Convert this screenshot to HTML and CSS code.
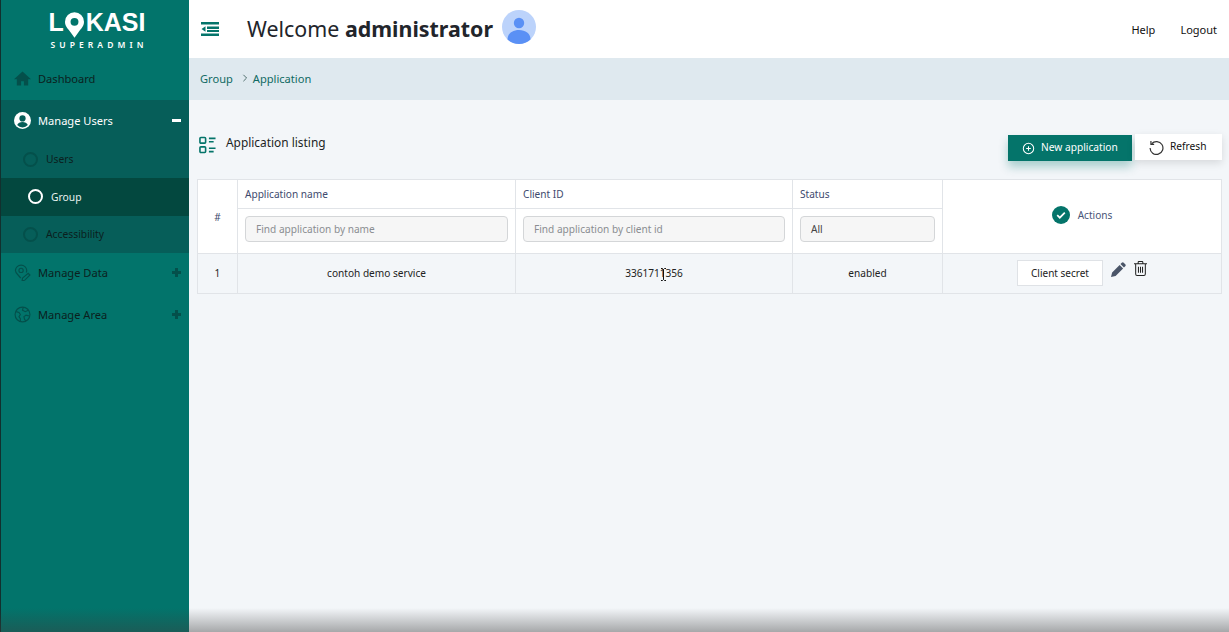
FILE: index.html
```html
<!DOCTYPE html>
<html>
<head>
    <meta charset="UTF-8">
    <meta name="viewport" content="width=device-width, initial-scale=1.0">
    <title>Lokasi Superadmin</title>
    <link rel="stylesheet" href="styles.css">
</head>
<body>
    <div class="app">
        <aside class="sidebar">
            <div class="logo">
                <div class="logo-word">
                    <span>L</span>
                    <svg class="logo-pin" viewBox="0 0 24 32"><path fill-rule="evenodd" fill="#fff" d="M12 0a12 12 0 0 1 12 12c0 6-4 9-7 13l-5 7-5-7C4 21 0 18 0 12A12 12 0 0 1 12 0zm0 7a5 5 0 1 0 0 10 5 5 0 0 0 0-10z"/></svg>
                    <span>KASI</span>
                </div>
                <div class="logo-sub">SUPERADMIN</div>
            </div>
            <div class="menu-item">
                <svg class="menu-icon" viewBox="0 0 24 24"><path fill="#04504b" d="M12 2 0 13h4v9h6v-6h4v6h6v-9h4z"/></svg>
                <span>Dashboard</span>
            </div>
            <div class="menu-group">
                <div class="menu-item menu-open">
                    <svg class="menu-icon" viewBox="0 0 24 24"><circle cx="12" cy="12" r="12" fill="#fff"/><circle cx="12" cy="9" r="4.4" fill="#065e59"/><path fill="#065e59" d="M4.5 18.5c1-3.4 4-4.5 7.500-4.500s6.500 1.100 7.500 4.500a10 10 0 0 1-15 0z"/></svg>
                    <span>Manage Users</span>
                    <span class="menu-toggle minus"></span>
                </div>
                <div class="sub-item"><span class="ring"></span>Users</div>
                <div class="sub-item sub-active"><span class="ring"></span>Group</div>
                <div class="sub-item"><span class="ring"></span>Accessibility</div>
            </div>
            <div class="menu-item menu-low">
                <svg class="menu-icon" viewBox="0 0 24 24" fill="none" stroke="#04504b" stroke-width="1.600"><circle cx="10" cy="9" r="3"/><path d="M10 1.500a8 8 0 0 1 8 7.500c0 1-.3 2-.8 3M10 1.500a8 8 0 0 0-8 7.500c0 4 4 6 7.500 11M12 20l8-7 2.500 2.500-7.500 7.500-3.500.5z"/></svg>
                <span>Manage Data</span>
                <span class="menu-toggle plus"></span>
            </div>
            <div class="menu-item menu-low">
                <svg class="menu-icon" viewBox="0 0 24 24" fill="none" stroke="#04504b" stroke-width="1.600"><circle cx="12" cy="12" r="10.500"/><path d="M3 8l4 1 2 3-2 3 2 3v4M13 2l-1 4 4 2 4-2M21 14l-4-1-3 2 1 4 2 2"/></svg>
                <span>Manage Area</span>
                <span class="menu-toggle plus"></span>
            </div>
        </aside>

        <main class="main">
            <header class="topbar">
                <svg class="collapse-icon" viewBox="0 0 18 14"><path fill="#04746a" d="M0 0h18v2.500H0zM6 4.500h12V7H6zM6 8h12v2H6zM0 11.500h18V14H0zM4.500 4.200v5.600L0.500 7z"/></svg>
                <h1 class="welcome">Welcome <b>administrator</b></h1>
                <svg class="avatar" viewBox="0 0 34 34"><circle cx="17" cy="17" r="17" fill="#bcd3fb"/><circle cx="17" cy="13" r="5.200" fill="#5a90f5"/><path fill="#5a90f5" d="M5.500 29.500c0-6 5-9.500 11.500-9.500s11.500 3.500 11.500 9.500A17 17 0 0 1 17 34a17 17 0 0 1-11.500-4.500z"/></svg>
                <nav class="top-links">
                    <a>Help</a>
                    <a>Logout</a>
                </nav>
            </header>

            <div class="breadcrumb">
                <span>Group</span>
                <svg class="crumb-sep" viewBox="0 0 6 10"><path d="M1 1l4 4-4 4" fill="none" stroke="#3d5f5c" stroke-width="1.100"/></svg>
                <span>Application</span>
            </div>

            <section class="content">
                <div class="page-head">
                    <div class="page-title">
                        <svg class="list-icon" viewBox="0 0 18 18" fill="none" stroke="#04746a" stroke-width="1.700"><rect x="1" y="1" width="6" height="6" rx="1"/><rect x="1" y="11" width="6" height="6" rx="1"/><path d="M10.500 2h7M10.500 5.500h5M10.500 12.500h7M10.500 16h5"/></svg>
                        <span>Application listing</span>
                    </div>
                    <div class="page-actions">
                        <button class="btn btn-primary">
                            <svg class="btn-icon" viewBox="0 0 14 14" fill="none" stroke="#fff" stroke-width="1.100"><circle cx="7" cy="7" r="5.600"/><path d="M7 4.500v5M4.500 7h5"/></svg>
                            New application
                        </button>
                        <button class="btn btn-light">
                            <svg class="btn-icon refresh-icon" viewBox="0 0 14 14" fill="none" stroke="#333" stroke-width="1.100"><path d="M2.500 3.500A6 6 0 1 1 1 7.500"/><path d="M1.800 1v3h3" /></svg>
                            Refresh
                        </button>
                    </div>
                </div>

                <table class="listing">
                    <thead>
                        <tr class="head-row">
                            <th class="col-num" rowspan="2">#</th>
                            <th class="col-name">Application name</th>
                            <th class="col-client">Client ID</th>
                            <th class="col-status">Status</th>
                            <th class="col-actions" rowspan="2">
                                <div class="actions-head">
                                    <svg class="check-icon" viewBox="0 0 18 18"><circle cx="9" cy="9" r="9" fill="#04746a"/><path d="M5.200 9.200l2.600 2.500 5-5" fill="none" stroke="#fff" stroke-width="1.700"/></svg>
                                    <span>Actions</span>
                                </div>
                            </th>
                        </tr>
                        <tr class="filter-row">
                            <th><input class="filter" placeholder="Find application by name"></th>
                            <th><input class="filter" placeholder="Find application by client id"></th>
                            <th><div class="filter filter-select">All</div></th>
                        </tr>
                    </thead>
                    <tbody>
                        <tr class="data-row">
                            <td>1</td>
                            <td>contoh demo service</td>
                            <td><span class="client-id">3361711356<svg class="ibeam" viewBox="0 0 7 13"><path d="M1 .5h1.500l1 1 1-1H6M3.500 1.500v10M1 12.500h1.500l1-1 1 1H6" fill="none" stroke="#111" stroke-width="1"/></svg></span></td>
                            <td>enabled</td>
                            <td>
                                <div class="row-actions">
                                    <button class="btn-secret">Client secret</button>
                                    <svg class="pencil-icon" viewBox="0 0 16 16"><path fill="#4a5568" d="M11.500.8a1.500 1.500 0 0 1 2.100 0l1.600 1.600a1.500 1.500 0 0 1 0 2.100l-1.400 1.400-3.700-3.700zM9.200 3.100l3.700 3.700-8 8L0 16l1.200-4.900z"/></svg>
                                    <svg class="trash-icon" viewBox="0 0 14 16" fill="none" stroke="#222" stroke-width="1.100"><path d="M0 3h14M4.500 3V1.200q0-.7.700-.7h3.600q.7 0 .7.700V3M1.800 3v11q0 1.500 1.500 1.500h7.400q1.500 0 1.500-1.500V3M4.800 6v6.500M7 6v6.500M9.200 6v6.500"/></svg>
                                </div>
                            </td>
                        </tr>
                    </tbody>
                </table>
            </section>
        </main>
    </div>
    <div class="bottom-fade"></div>
</body>
</html>
```

FILE: styles.css
```css
* {
    box-sizing: border-box;
}
html, body {
    margin: 0;
    height: 632px;
    overflow: hidden;
}
body {
    font-family: "Noto Sans", "Open Sans", sans-serif;
    font-size: 11px;
    color: #222;
    background-color: #f3f6f9;
}
.app {
    display: flex;
    height: 632px;
}

/* sidebar */
.sidebar {
    width: 189px;
    flex: none;
    background: #02746b;
    border-left: 1px solid #12302e;
    color: #0b1f1e;
}
.logo {
    height: 58px;
    padding-top: 10px;
    display: flex;
    flex-direction: column;
    align-items: center;
    color: white;
    margin-left: 4px;
}
.logo-word {
    display: flex;
    align-items: flex-start;
    height: 30px;
    font-family: "Liberation Sans", sans-serif;
    font-size: 25px;
    font-weight: bold;
    line-height: 24px;
}
.logo-pin {
    width: 19px;
    height: 26px;
    margin: 2px 2px 0 1px;
}
.logo-sub {
    font-family: "Noto Sans", sans-serif;
    font-size: 8.500px;
    font-weight: 600;
    letter-spacing: 4.100px;
    line-height: 10px;
    margin-left: 4px;
}
.menu-item {
    height: 42px;
    display: flex;
    align-items: center;
    padding: 0 8px 2px 13px;
    font-size: 11.100px;
}
.menu-low {
    padding-bottom: 4px;
}
.menu-icon {
    width: 17px;
    height: 17px;
    margin-right: 7px;
    flex: none;
}
.menu-group {
    background: #065e59;
}
.menu-open {
    height: 41px;
    color: white;
    padding-bottom: 1px;
}
.menu-toggle {
    margin-left: auto;
    position: relative;
    width: 9px;
    height: 9px;
}
.minus::before, .plus::before, .plus::after {
    content: "";
    position: absolute;
    background: #04504b;
}
.minus::before {
    background: white;
    left: 0;
    right: 0;
    top: 3px;
    height: 3px;
}
.plus::before {
    left: 0;
    right: 0;
    top: 3px;
    height: 3px;
}
.plus::after {
    top: 0;
    bottom: 0;
    left: 3px;
    width: 3px;
}
.sub-item {
    height: 37px;
    display: flex;
    align-items: center;
    padding: 0 0 1px 22px;
    font-size: 10.300px;
}
.ring {
    width: 15px;
    height: 15px;
    border: 2px solid #04504b;
    border-radius: 50%;
    margin-right: 8px;
}
.sub-active {
    height: 38px;
    background: #03483f;
    color: #e8f2f0;
    padding-left: 27px;
}
.sub-active .ring {
    border-color: white;
}

/* top */
.main {
    flex: 1;
    min-width: 0;
    display: flex;
    flex-direction: column;
}
.topbar {
    height: 58px;
    flex: none;
    background: white;
    display: flex;
    align-items: center;
    padding: 0 12px 0 12px;
}
.collapse-icon {
    width: 18px;
    height: 14px;
    margin-right: 28px;
}
.welcome {
    margin: -2px 9px 0 0;
    font-size: 21.400px;
    font-weight: normal;
    color: #22252b;
}
.avatar {
    width: 34px;
    height: 34px;
    margin-top: -5px;
}
.top-links {
    margin-left: auto;
    display: flex;
    gap: 25px;
    color: #111;
    font-size: 11px;
}
.breadcrumb {
    height: 42px;
    flex: none;
    background: #dfe9ef;
    display: flex;
    align-items: center;
    padding: 0 0 2px 11px;
    color: #106a63;
    font-size: 11.100px;
}
.crumb-sep {
    width: 6px;
    height: 8px;
    margin: 0 5px 0 9px;
}

/* content */
.content {
    flex: 1;
    padding: 33px 7px 0 8px;
}
.page-head {
    display: flex;
    justify-content: space-between;
    height: 46px;
}
.page-title {
    display: flex;
    align-items: center;
    height: 19px;
    margin: -1px 0 0 2px;
    color: #1c1f24;
    font-size: 11.900px;
}
.list-icon {
    width: 17px;
    height: 18px;
    margin-right: 10px;
    margin-top: 6px;
}
.page-actions {
    display: flex;
    align-items: flex-start;
    margin-top: 1px;
}
.btn {
    font-family: inherit;
    font-size: 10.200px;
    border: none;
    height: 26px;
    display: flex;
    align-items: center;
    padding-bottom: 3px;
    cursor: pointer;
}
.btn-primary {
    width: 124px;
    margin-top: 1px;
    padding-left: 14px;
    background: #04746a;
    color: white;
    box-shadow: 0 6px 10px rgba(4, 116, 106, 0.3);
}
.btn-light {
    width: 87px;
    margin-left: 3px;
    padding-left: 14px;
    background: white;
    color: #111;
    box-shadow: 0 3px 8px rgba(0, 0, 0, 0.12);
}
.btn-icon {
    width: 13px;
    height: 13px;
    margin: 2px 6px 0 0;
}
.refresh-icon {
    width: 15px;
    height: 15px;
    margin-right: 6px;
}

/* table */
.listing {
    width: 1025px;
    table-layout: fixed;
    border-collapse: collapse;
    background: white;
}
.listing th, .listing td {
    border: 1px solid #e1e4e8;
    font-weight: normal;
    padding: 0;
}
.col-num {
    width: 40px;
    color: #3e4a6e;
    font-size: 10.100px;
}
.col-name {
    width: 278px;
}
.col-client {
    width: 277px;
}
.col-status {
    width: 150px;
}
.head-row th {
    height: 29px;
    font-size: 10.100px;
    color: #3e4a6e;
}
.col-name, .col-client, .col-status {
    text-align: left;
    padding-left: 7px !important;
}
.filter-row th {
    height: 45px;
    padding: 0 7px 5px;
}
.filter {
    display: block;
    width: 100%;
    height: 26px;
    padding: 0 10px;
    background: #f6f6f6;
    border: 1px solid #d4d6d8;
    border-radius: 4px;
    font-family: inherit;
    font-size: 10.100px;
    text-align: left;
    line-height: 24px;
    color: #444;
}
.filter::placeholder {
    color: #8a8d91;
    opacity: 1;
}
.actions-head {
    display: flex;
    align-items: center;
    justify-content: center;
    gap: 8px;
    margin-top: -3px;
    color: #4a5578;
    font-size: 10.100px;
}
.check-icon {
    width: 18px;
    height: 18px;
}
.data-row td {
    height: 40px;
    padding-bottom: 2px;
    background: #f3f6f9;
    text-align: center;
    font-size: 10.100px;
    color: #222;
}
.client-id {
    position: relative;
}
.ibeam {
    position: absolute;
    left: 35px;
    top: 2px;
    width: 7px;
    height: 13px;
}
.row-actions {
    display: flex;
    justify-content: center;
    align-items: flex-start;
    height: 26px;
}
.btn-secret {
    width: 86px;
    height: 26px;
    background: white;
    border: 1px solid #dfe2e6;
    font-family: inherit;
    font-size: 10px;
    color: #222;
    padding: 0;
}
.pencil-icon {
    width: 15px;
    height: 15px;
    margin: 2px 0 0 8px;
}
.trash-icon {
    width: 13px;
    height: 15px;
    margin: 1px 0 0 8px;
}

/* fade along the bottom edge */
.bottom-fade {
    position: absolute;
    left: 0;
    right: 0;
    bottom: 0;
    height: 24px;
    background: linear-gradient(rgba(60, 60, 60, 0), rgba(60, 60, 60, 0.42));
    pointer-events: none;
}
```
